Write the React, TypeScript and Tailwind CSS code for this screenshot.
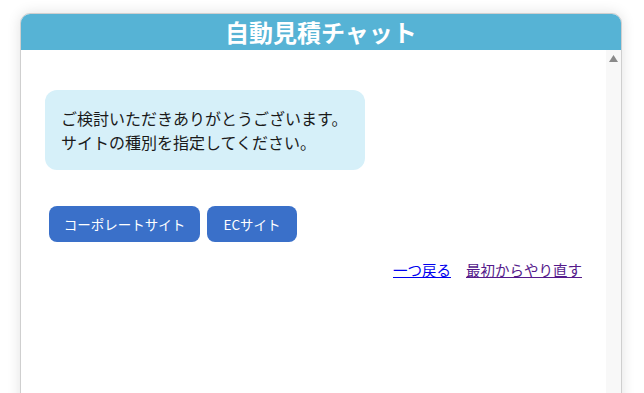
const FONT = "font-['Meiryo','Noto_Sans_CJK_JP','Liberation_Sans',sans-serif]";

const CHOICES = [
  { label: "コーポレートサイト", width: "w-[151px]" },
  { label: "ECサイト", width: "w-[90px]" },
];

export default function App() {
  return (
    <div className={`h-[393px] overflow-hidden bg-white pt-[13px] ${FONT}`}>
      <div className="mx-[20px] flex h-[400px] w-[602px] flex-col overflow-hidden rounded-t-[10px] border border-[#cfcfcf] bg-white shadow-[0_0_14px_rgba(0,0,0,0.12)]">
        {/* Header */}
        <div className="flex h-[36px] shrink-0 items-center justify-center bg-[#56b3d5]">
          <h1 className="text-[24px] font-bold leading-none text-white">自動見積チャット</h1>
        </div>

        {/* Body + scrollbar */}
        <div className="flex flex-1">
          <div className="flex-1 px-[24px] pt-[40px]">
            {/* Bot message */}
            <div className="inline-block rounded-[12px] bg-[#d6f0f9] py-[16px] pl-[16px] pr-[18px] text-[16px] leading-[24px] text-[#1a1a1a]">
              ご検討いただきありがとうございます。
              <br />
              サイトの種別を指定してください。
            </div>

            {/* Choices */}
            <div className="mt-[36px] flex gap-[7px] pl-[4px]">
              {CHOICES.map((c) => (
                <button
                  key={c.label}
                  className={`${c.width} h-[36px] rounded-[8px] bg-[#3a70c9] text-center text-[13.5px] text-white`}
                >
                  {c.label}
                </button>
              ))}
            </div>

            {/* Links */}
            <div className="mt-[18px] flex justify-end gap-[15px] text-[14.5px] leading-[20px]">
              <a href="#" className="text-[#0000ee] underline">
                一つ戻る
              </a>
              <a href="#" className="text-[#551a8b] underline">
                最初からやり直す
              </a>
            </div>
          </div>

          {/* Scrollbar */}
          <div className="w-[15px] shrink-0 bg-[#f8f8f8] pt-[5px]">
            <svg width="15" height="8" viewBox="0 0 15 8" className="block">
              <path d="M7.5 0 L12 7 L3 7 Z" fill="#8a8a8a" />
            </svg>
          </div>
        </div>
      </div>
    </div>
  );
}
